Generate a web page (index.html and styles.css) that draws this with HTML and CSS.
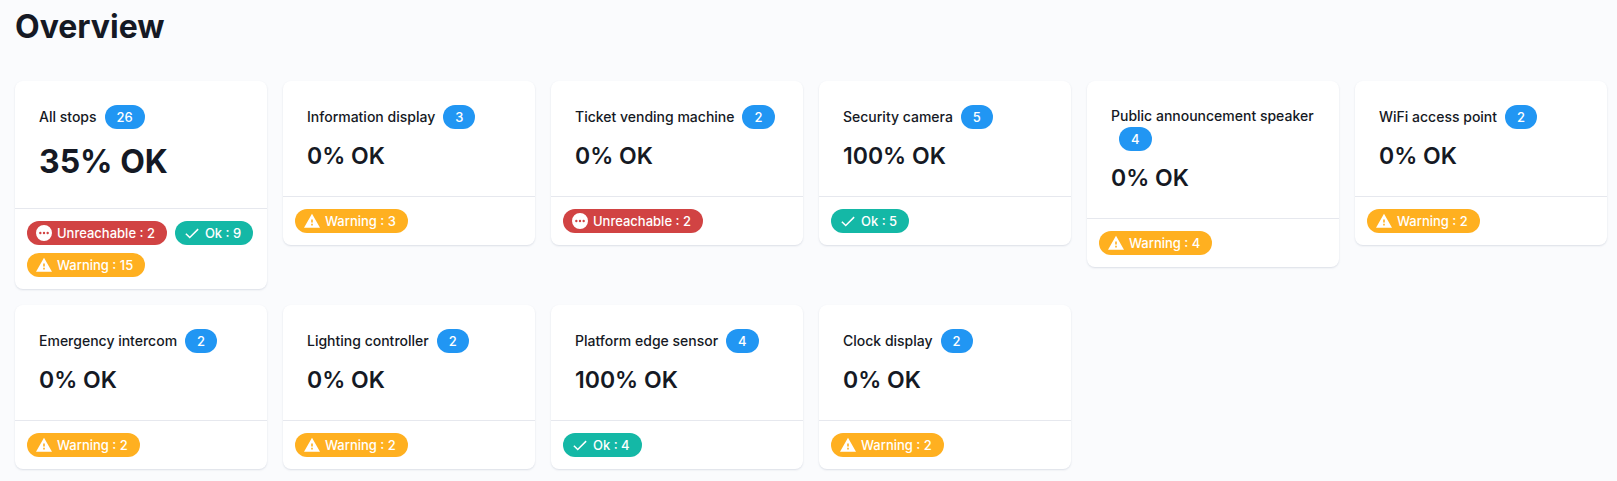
FILE: index.html
```html
<!DOCTYPE html>
<html lang="en">
<head>
<meta charset="utf-8">
<title>Overview</title>
<link rel="stylesheet" href="styles.css">
</head>
<body>
<svg class="sprite" aria-hidden="true">
  <symbol id="unreachable" viewBox="0 0 24 24"><path fill-rule="evenodd" d="M12 0a12 12 0 1 0 0 24 12 12 0 0 0 0-24zM6.500 10.200a1.800 1.800 0 1 1 0 3.600 1.800 1.800 0 0 1 0-3.600zm5.500 0a1.800 1.800 0 1 1 0 3.600 1.800 1.800 0 0 1 0-3.600zm5.500 0a1.800 1.800 0 1 1 0 3.600 1.800 1.800 0 0 1 0-3.600z"/></symbol>
  <symbol id="ok" viewBox="0 0 24 24"><path d="M8.600 17.200 3.600 12.200l-1.600 1.600L8.600 20.400 22 7l-1.600-1.600z"/></symbol>
  <symbol id="warning" viewBox="0 0 24 24"><path d="M0 22h24L12 1 0 22zm13.200-3.400h-2.400v-2.400h2.400v2.400zm0-4.400h-2.400V9.800h2.400v4.400z"/></symbol>
</svg>
<main class="page">
  <h1 class="page-title">Overview</h1>
  <div class="grid">
    <section class="card">
      <div class="card-body"><h2 class="card-title">All stops<span class="count">26</span></h2><p class="value value-large">35% OK</p></div>
      <div class="card-footer">
        <span class="chip chip-error"><svg class="icon"><use href="#unreachable"/></svg>Unreachable : 2</span>
        <span class="chip chip-ok"><svg class="icon"><use href="#ok"/></svg>Ok : 9</span>
        <span class="chip chip-warning"><svg class="icon"><use href="#warning"/></svg>Warning : 15</span>
      </div>
    </section>
    <section class="card">
      <div class="card-body"><h2 class="card-title">Information display<span class="count">3</span></h2><p class="value">0% OK</p></div>
      <div class="card-footer"><span class="chip chip-warning"><svg class="icon"><use href="#warning"/></svg>Warning : 3</span></div>
    </section>
    <section class="card">
      <div class="card-body"><h2 class="card-title">Ticket vending machine<span class="count">2</span></h2><p class="value">0% OK</p></div>
      <div class="card-footer"><span class="chip chip-error"><svg class="icon"><use href="#unreachable"/></svg>Unreachable : 2</span></div>
    </section>
    <section class="card">
      <div class="card-body"><h2 class="card-title">Security camera<span class="count">5</span></h2><p class="value">100% OK</p></div>
      <div class="card-footer"><span class="chip chip-ok"><svg class="icon"><use href="#ok"/></svg>Ok : 5</span></div>
    </section>
    <section class="card">
      <div class="card-body"><h2 class="card-title">Public announcement speaker<span class="count">4</span></h2><p class="value">0% OK</p></div>
      <div class="card-footer"><span class="chip chip-warning"><svg class="icon"><use href="#warning"/></svg>Warning : 4</span></div>
    </section>
    <section class="card">
      <div class="card-body"><h2 class="card-title">WiFi access point<span class="count">2</span></h2><p class="value">0% OK</p></div>
      <div class="card-footer"><span class="chip chip-warning"><svg class="icon"><use href="#warning"/></svg>Warning : 2</span></div>
    </section>
    <section class="card">
      <div class="card-body"><h2 class="card-title">Emergency intercom<span class="count">2</span></h2><p class="value">0% OK</p></div>
      <div class="card-footer"><span class="chip chip-warning"><svg class="icon"><use href="#warning"/></svg>Warning : 2</span></div>
    </section>
    <section class="card">
      <div class="card-body"><h2 class="card-title">Lighting controller<span class="count">2</span></h2><p class="value">0% OK</p></div>
      <div class="card-footer"><span class="chip chip-warning"><svg class="icon"><use href="#warning"/></svg>Warning : 2</span></div>
    </section>
    <section class="card">
      <div class="card-body"><h2 class="card-title">Platform edge sensor<span class="count">4</span></h2><p class="value">100% OK</p></div>
      <div class="card-footer"><span class="chip chip-ok"><svg class="icon"><use href="#ok"/></svg>Ok : 4</span></div>
    </section>
    <section class="card">
      <div class="card-body"><h2 class="card-title">Clock display<span class="count">2</span></h2><p class="value">0% OK</p></div>
      <div class="card-footer"><span class="chip chip-warning"><svg class="icon"><use href="#warning"/></svg>Warning : 2</span></div>
    </section>
  </div>
</main>
</body>
</html>
```
FILE: styles.css
```css
* { box-sizing: border-box; }

body {
  margin: 0;
  background: #fafbfd;
  color: #151924;
  font-family: Inter, "Liberation Sans", sans-serif;
}

.sprite { display: none; }

.page { padding: 5px 10px 12px 15px; }

.page-title {
  margin: 0 0 32px;
  font-size: 32px;
  line-height: 44px;
  font-weight: 700;
}

.grid {
  display: grid;
  grid-template-columns: repeat(6, minmax(0, 1fr));
  gap: 16px;
  align-items: start;
}

.card {
  background: #fff;
  border-radius: 8px;
  box-shadow: 0 1px 2px rgba(100, 116, 139, 0.2);
}

.card-body { padding: 24px 24px 22px; }

.card-title {
  margin: 0 0 9px;
  font-size: 14px;
  line-height: 22px;
  font-weight: 500;
}

.count {
  display: inline-flex;
  align-items: center;
  height: 24px;
  margin-left: 8px;
  padding: 0 12px;
  border-radius: 12px;
  background: #2196f3;
  color: #fff;
  font-size: 13px;
  vertical-align: baseline;
}

.value {
  margin: 0;
  font-size: 23px;
  line-height: 36px;
  font-weight: 600;
}

.value-large {
  font-size: 32px;
  line-height: 48px;
  font-weight: 700;
}

.card-footer {
  display: flex;
  flex-wrap: wrap;
  gap: 8px;
  padding: 12px;
  border-top: 1px solid #e6e8ee;
}

.chip {
  display: inline-flex;
  align-items: center;
  gap: 5px;
  height: 24px;
  padding: 0 12px 0 9px;
  border-radius: 12px;
  color: #fff;
  font-size: 13px;
  font-weight: 500;
  white-space: nowrap;
}

.chip-error { background: #d14343; }
.chip-ok { background: #14b8a6; }
.chip-warning { background: #ffb020; }

.icon {
  width: 16px;
  height: 16px;
  fill: currentColor;
}
```
